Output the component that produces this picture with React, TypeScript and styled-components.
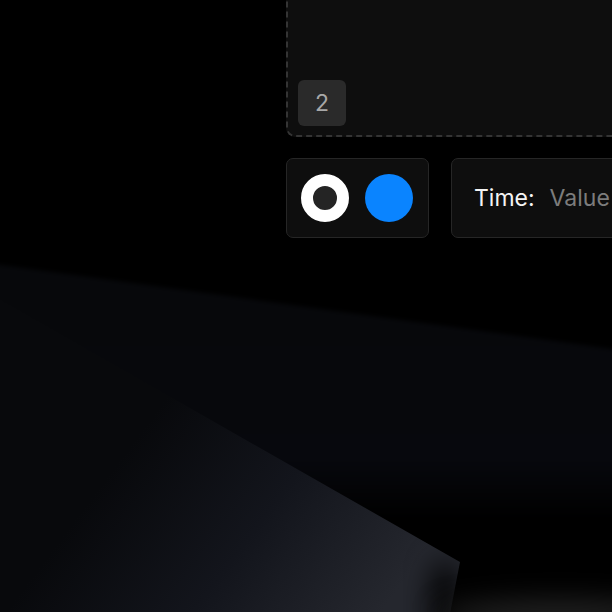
import React from 'react';
import styled, { createGlobalStyle } from 'styled-components';

const GlobalStyle = createGlobalStyle`
    html, body {
        margin: 0;
        padding: 0;
        background: #000;
    }
    body {
        font-family: Inter, "Noto Sans", "Liberation Sans", sans-serif;
        color: #f2f2f2;
    }
`;

const Page = styled.div`
    position: relative;
    width: 612px;
    height: 612px;
    overflow: hidden;
    background: #000;
`;

const Backdrop = styled.svg`
    position: absolute;
    inset: 0;
    z-index: 0;
`;

const Content = styled.div`
    position: relative;
    z-index: 1;
    display: flex;
    flex-direction: column;
    align-items: flex-start;
    gap: 21px;
    padding-left: 286px;
`;

const DropZone = styled.div`
    flex-shrink: 0;
    display: flex;
    align-items: flex-end;
    box-sizing: border-box;
    height: 157px;
    margin-top: -20px;
    width: 420px;
    padding: 0 0 9px 10px;
    background: #0e0e0e;
    border: 2px dashed #343434;
    border-radius: 9px;
`;

const Badge = styled.div`
    display: flex;
    align-items: center;
    justify-content: center;
    width: 48px;
    height: 46px;
    border-radius: 6px;
    background: #2a2a2a;
    color: #a8a8a8;
    font-size: 23px;
`;

const Toolbar = styled.div`
    display: flex;
    gap: 22px;
`;

const Card = styled.div`
    flex-shrink: 0;
    box-sizing: border-box;
    display: flex;
    align-items: center;
    height: 80px;
    background: #0e0e0e;
    border: 1.5px solid #262626;
    border-radius: 7px;
`;

const SwatchCard = styled(Card)`
    width: 143px;
    gap: 16px;
    padding-left: 14px;
`;

const Swatch = styled.div<{ $color: string; $ring?: boolean }>`
    flex-shrink: 0;
    box-sizing: border-box;
    width: 48px;
    height: 48px;
    border-radius: 50%;
    background: ${p => (p.$ring ? '#242424' : p.$color)};
    border: ${p => (p.$ring ? `12.5px solid ${p.$color}` : 'none')};
`;

const InfoCard = styled(Card)`
    width: 300px;
    padding-left: 22px;
    font-size: 23px;
    white-space: nowrap;
`;

const Label = styled.span`
    color: #f4f4f4;
    margin-right: 15px;
`;

const Value = styled.span`
    color: #7c7c7c;
`;

export default function App() {
    return (
        <Page>
            <GlobalStyle />
            <Backdrop width="612" height="612" viewBox="0 0 612 612">
                <defs>
                    <filter id="soft" x="-30%" y="-30%" width="160%" height="160%" colorInterpolationFilters="sRGB">
                        <feGaussianBlur stdDeviation="2" />
                    </filter>
                    <filter id="wide" x="-100%" y="-100%" width="300%" height="300%" colorInterpolationFilters="sRGB">
                        <feGaussianBlur stdDeviation="14" />
                    </filter>
                    <linearGradient id="navy" gradientUnits="userSpaceOnUse" x1="0" y1="280" x2="0" y2="520">
                        <stop offset="0" stopColor="#07080b" />
                        <stop offset="0.75" stopColor="#07080d" />
                        <stop offset="1" stopColor="#000000" />
                    </linearGradient>
                    <linearGradient id="slate" gradientUnits="userSpaceOnUse" x1="150" y1="420" x2="390" y2="600">
                        <stop offset="0" stopColor="#08090c" />
                        <stop offset="0.5" stopColor="#13151c" />
                        <stop offset="1" stopColor="#25272e" />
                    </linearGradient>
                </defs>
                <polygon
                    points="-20,262 612,349 640,352 640,640 -20,640"
                    fill="url(#navy)"
                    filter="url(#soft)"
                />
                <polygon
                    points="-20,288 190,408 460,562 445,640 -20,640"
                    fill="url(#slate)"
                />
                <ellipse cx="445" cy="605" rx="14" ry="45" fill="#000" filter="url(#wide)" />
                <ellipse cx="560" cy="616" rx="120" ry="16" fill="#222222" filter="url(#wide)" />
            </Backdrop>
            <Content>
                <DropZone>
                    <Badge>2</Badge>
                </DropZone>
                <Toolbar>
                    <SwatchCard>
                        <Swatch $color="#ffffff" $ring />
                        <Swatch $color="#0a84ff" />
                    </SwatchCard>
                    <InfoCard>
                        <Label>Time:</Label>
                        <Value>Value</Value>
                    </InfoCard>
                </Toolbar>
            </Content>
        </Page>
    );
}
